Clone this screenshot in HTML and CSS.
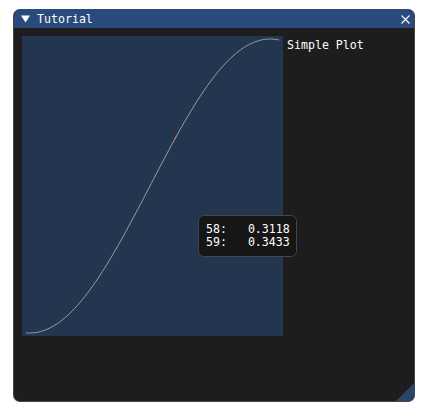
FILE: index.html
```html
<!DOCTYPE html>
<html>
<head>
<meta charset="utf-8">
<link rel="stylesheet" href="styles.css">
</head>
<body>
<div class="window">
  <div class="titlebar">
    <svg class="arrow" width="9" height="8" viewBox="0 0 9 8"><polygon points="0,0.5 9,0.5 4.5,7.5" fill="#fff"/></svg>
    <span class="title">Tutorial</span>
    <svg class="close" width="9" height="9" viewBox="0 0 9 9"><path d="M0.5 0.5 L8.5 8.5 M8.5 0.5 L0.5 8.5" stroke="#fff" stroke-width="1.1" fill="none"/></svg>
  </div>
  <div class="content">
    <div class="plot-row">
      <svg class="plot" width="261" height="300" viewBox="0 0 261 300">
        <rect x="0" y="0" width="261" height="300" fill="#24354f"/>
        <path class="line" d=""/>
        <path class="hover" d=""/>
      </svg>
      <span class="label">Simple Plot</span>
    </div>
  </div>
  <svg class="grip" width="18" height="18" viewBox="0 0 18 18"><polygon points="0,18 18,0 18,18" fill="#28456a"/></svg>
  <div class="tooltip">58:   0.3118
59:   0.3433</div>
</div>
<script src="script.js"></script>
</body>
</html>
```
FILE: styles.css
```css
body {
  margin: 0;
  background: #ffffff;
  font-family: "DejaVu Sans Mono", "Liberation Mono", monospace;
  font-size: 11.6px;
  color: #ffffff;
}
.window {
  position: relative;
  margin: 9px 0 0 13px;
  width: 402px;
  height: 393px;
  box-sizing: border-box;
  border: 1px solid #46464f;
  border-top-color: #294a7a;
  border-radius: 7px;
  background: #1d1d1d;
  overflow: hidden;
  display: flex;
  flex-direction: column;
}
.titlebar {
  height: 18px;
  flex: none;
  background: #294a7a;
  display: flex;
  align-items: center;
  padding: 0 4px 0 7px;
}
.arrow {
  flex: none;
  margin-right: 7px;
}
.title {
  flex: 1;
  line-height: 13px;
  padding-top: 1px;
}
.close {
  flex: none;
  margin-top: 1px;
}
.content {
  padding: 8px 0 0 8px;
}
.plot-row {
  display: flex;
  gap: 4px;
  align-items: flex-start;
}
.plot {
  display: block;
  flex: none;
}
.plot .line {
  fill: none;
  stroke: #9c9c9c;
  stroke-width: 1;
}
.plot .hover {
  fill: none;
  stroke: #ff6e59;
  stroke-width: 1;
}
.label {
  padding-top: 3px;
  line-height: 13px;
}
.grip {
  position: absolute;
  right: 0;
  bottom: 0;
}
.tooltip {
  position: absolute;
  left: 184px;
  top: 205px;
  width: 99px;
  height: 42px;
  box-sizing: border-box;
  border: 1px solid #45454d;
  border-radius: 6px;
  background: #161616;
  padding: 7px 0 0 7px;
  line-height: 13px;
  white-space: pre;
}
```
FILE: script.js
```js
(function () {
  var N = 100;
  var vals = [];
  for (var i = 0; i < N; i++) vals.push(Math.sin(-1.62 + i * 0.0334));
  var min = Math.min.apply(null, vals);
  var max = Math.max.apply(null, vals);
  function px(i) { return 4 + i * 253 / (N - 1); }
  function py(v) { return 3 + (1 - (v - min) / (max - min)) * 294; }
  var d = "";
  for (var j = 0; j < N; j++) {
    d += (j === 0 ? "M" : "L") + px(j).toFixed(2) + " " + py(vals[j]).toFixed(2) + " ";
  }
  document.querySelector(".plot .line").setAttribute("d", d);
  var h = "M" + px(58).toFixed(2) + " " + py(vals[58]).toFixed(2) + " L" + px(59).toFixed(2) + " " + py(vals[59]).toFixed(2);
  document.querySelector(".plot .hover").setAttribute("d", h);
})();
```
